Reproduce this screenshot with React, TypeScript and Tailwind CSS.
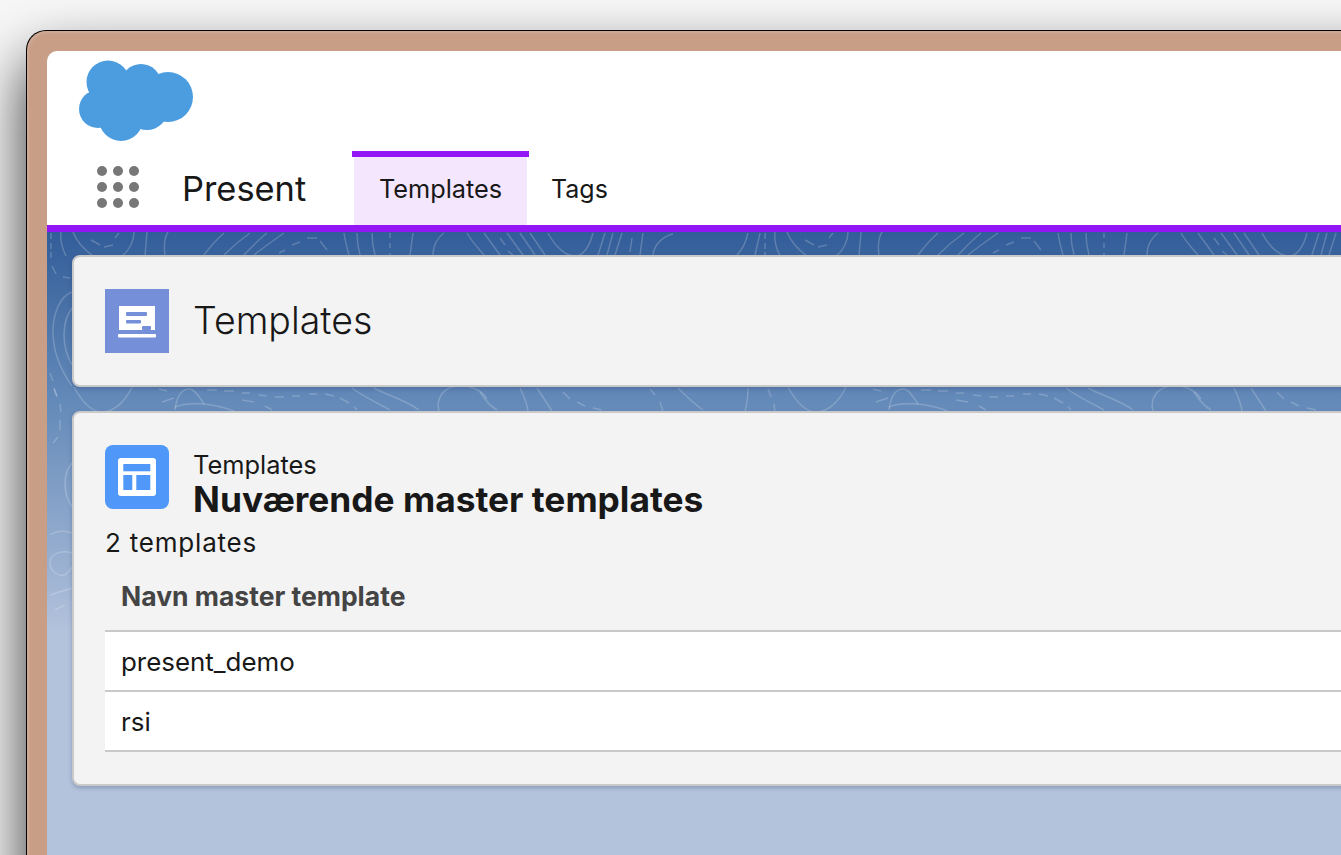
// background contour lines, the pattern repeats every 714px across the page
const tileLines = [
  // strip under the header
  "M51 233V239", "M51 243V249", "M51 252V258",
  "M61 232C60 240 63 250 66 256",
  "M73 232C76 240 82 248 93 256",
  "M91 240L100 245", "M104 247L113 245", "M115 238L119 233",
  "M134 232C134 240 130 250 122 256",
  "M147 232L145 256",
  "M168 232C164 238 164 248 165 256",
  "M204 255C210 247 216 240 224 233",
  "M224 255C232 247 240 240 250 233",
  "M244 255C252 247 258 240 267 233",
  "M254 255C264 247 274 240 284 233",
  "M279 253L285 250", "M292 245L300 242", "M307 238H317", "M320 241L327 250",
  "M344 233C345 240 347 248 349 255",
  "M357 233C357 240 358 248 360 255",
  "M372 233C372 240 373 248 375 255",
  "M390 233V238", "M390 243V248", "M390 253V256",
  "M413 233C412 240 411 248 410 255",
  "M444 233C438 237 433 245 433 255",
  "M467 233C472 242 478 248 484 255",
  "M484 233L500 255",
  "M500 238L505 245", "M508 251L513 255",
  "M507 233L523 255", "M520 233L535 255", "M530 233L545 255",
  "M548 233C556 248 566 256 575 256C584 256 590 245 593 233",
  "M605 233L598 255", "M613 233L607 255", "M622 233L615 255",
  "M632 238L630 252", "M643 233L640 255",
  "M673 234C664 236 654 244 653 255",
  "M748 233C746 242 742 250 737 255",
  "M760 233L755 255",
  // strip between the two cards
  "M54 389L57 397", "M60 404L61 412",
  "M74 387C80 398 90 412 102 412C115 412 126 400 132 387",
  "M159 389L167 391", "M162 402L174 398",
  "M175 410C176 400 180 389 189 389C195 389 200 398 204 404",
  "M175 407C186 402 210 402 234 411",
  "M207 390H217", "M224 391H234", "M242 393H250", "M242 400L254 402",
  "M259 395L267 396", "M275 397H284", "M292 396H300", "M309 394H317",
  "M325 394L334 396", "M340 398L349 403", "M354 407L357 410", "M265 406L272 410",
  "M352 388C362 396 376 402 390 410",
  "M374 388C384 394 406 400 419 410",
  "M439 411C436 400 442 387 458 386C470 385 482 390 487 399",
  "M480 392C485 400 490 406 497 410",
  "M520 388C524 396 527 404 528 411",
  "M537 388L552 411",
  "M563 392L570 399", "M577 402L585 406", "M593 408L602 410",
  "M650 389L655 395", "M660 402L663 411",
  "M678 388C686 396 694 404 703 410",
  "M748 388C748 396 747 404 745 411",
];

const leftLines = [
  "M52 266L56 274", "M63 277L70 278",
  "M72 292C60 296 52 315 53 335C54 355 62 372 72 386",
  "M72 308C66 316 64 325 64 335C64 347 68 358 72 365",
  "M50 373L53 381", "M54 388L57 396", "M60 420V430", "M53 443L58 437",
  "M72 463C67 469 65 476 65 483C65 493 68 501 72 507",
  "M50 535C56 531 64 530 72 533",
  "M72 553C62 550 50 553 50 563C50 572 58 576 64 575C68 574 70 570 72 567",
  "M50 595L72 588", "M55 610L65 605",
];

const tileOffsets = [-714, 0, 714];

// grid of nine dots in the header
function AppLauncher() {
  return (
    <div className="grid w-[42px] grid-cols-3 gap-[6px]">
      {Array.from({ length: 9 }).map((_, i) => (
        <span key={i} className="h-[10px] w-[10px] rounded-full bg-[#777777]" />
      ))}
    </div>
  );
}

function Cloud() {
  return (
    <svg width="116" height="82" viewBox="0 0 116 82" className="block">
      <g fill="#4b9ddf">
        <circle cx="30" cy="22" r="21.5" />
        <circle cx="63" cy="24" r="20" />
        <circle cx="90" cy="37" r="25" />
        <circle cx="20" cy="49" r="19" />
        <circle cx="43" cy="59" r="22" />
        <circle cx="69" cy="49" r="21" />
        <circle cx="55" cy="40" r="24" />
      </g>
    </svg>
  );
}

export default function App() {
  return (
    <div className="h-[855px] w-[1341px] overflow-hidden bg-[#f7f7f7] pl-[26px] pt-[30px] font-['Inter',sans-serif] text-[#181818]">
      <div className="h-[900px] w-[1400px] rounded-tl-[20px] border-l border-t border-black bg-[#c99e87] pl-[20px] pt-[20px] shadow-[0_30px_60px_rgba(0,0,0,0.8),inset_2px_2px_2px_rgba(255,255,255,0.12)]">
        <div className="relative flex h-full flex-col overflow-hidden rounded-tl-[10px] bg-white">
          <header className="relative h-[174px] shrink-0">
            <div className="pl-[31px] pt-[9px]">
              <Cloud />
            </div>
            <div className="absolute bottom-0 left-0 flex h-[74px] items-end">
              <div className="mb-[17px] ml-[50px]">
                <AppLauncher />
              </div>
              <div className="mb-[15px] ml-[43px] w-[172px] text-[34.4px] leading-[42px]">Present</div>
              <div className="relative flex h-[68px] w-[173px] items-center justify-center bg-[#f4e6fd] pb-[4px] text-[25.3px]">
                <span className="absolute -left-[2px] -right-[2px] -top-[6px] h-[6px] bg-[#9316f5]" />
                Templates
              </div>
              <div className="flex h-[68px] items-center pb-[3px] pl-[24px] text-[25px]">Tags</div>
            </div>
          </header>
          <div className="h-[7px] shrink-0 bg-[#9316f5]" />

          <main className="relative flex-1 bg-[linear-gradient(180deg,#335d99_0px,#3b659e_30px,#648ab9_170px,#9cb2d2_340px,#b4c3dc_400px,#b4c3dc_100%)] pl-[25px] pt-[23px]">
            <svg
              className="absolute left-0 top-0"
              width="1341"
              height="400"
              viewBox="47 232 1341 400"
              fill="none"
              stroke="#ffffff"
              strokeOpacity="0.2"
              strokeWidth="1.5"
            >
              {tileOffsets.map((x) => (
                <g key={x} transform={`translate(${x} 0)`}>
                  {tileLines.map((d) => (
                    <path key={d} d={d} />
                  ))}
                </g>
              ))}
              {leftLines.map((d) => (
                <path key={d} d={d} />
              ))}
            </svg>

            <section className="relative flex h-[132px] items-center gap-[24px] rounded-[8px] border-2 border-[#c9c9c9] bg-[#f3f3f3] pl-[31px] shadow-[0_2px_4px_rgba(40,60,110,0.3)]">
              <svg width="64" height="64" viewBox="0 0 64 64">
                <rect width="64" height="64" fill="#7590d9" />
                <rect x="14" y="17" width="36" height="24" fill="#fff" />
                <rect x="37" y="37" width="9" height="4" rx="1" fill="#7590d9" />
                <rect x="13" y="45" width="38" height="3.5" rx="1" fill="#fff" />
                <rect x="21" y="23" width="21" height="4" rx="1" fill="#7590d9" />
                <rect x="21" y="31" width="15" height="3.5" rx="1" fill="#7590d9" />
              </svg>
              <h1 className="text-[37.5px] font-light leading-none">Templates</h1>
            </section>

            <section className="relative mt-[24px] h-[375px] rounded-[8px] border-2 border-[#c9c9c9] bg-[#f3f3f3] pt-[32px] shadow-[0_2px_4px_rgba(40,60,110,0.3)]">
              <div className="flex gap-[24px] pl-[31px]">
                <svg width="64" height="64" viewBox="0 0 64 64" className="shrink-0">
                  <rect width="64" height="64" rx="8" fill="#4f97f9" />
                  <rect x="13" y="13" width="38" height="38" rx="3" fill="#fff" />
                  <rect x="18.3" y="19" width="27" height="7.3" fill="#4f97f9" />
                  <rect x="18.3" y="30" width="9" height="15" fill="#4f97f9" />
                  <rect x="31.3" y="30" width="14" height="15" fill="#4f97f9" />
                </svg>
                <div className="pt-[6px]">
                  <p className="text-[25.4px] leading-[28px]">Templates</p>
                  <h2 className="text-[35.3px] font-bold leading-[42px]">Nuværende master templates</h2>
                </div>
              </div>
              <p className="mt-[7px] pl-[31px] text-[26px] leading-[30px] tracking-[0.8px]">2 templates</p>
              <div className="ml-[31px] mt-[10px]">
                <div className="flex h-[64px] items-center border-b-2 border-[#c9c9c9] pb-[4px] pl-[16px] text-[26.5px] font-bold text-[#444444]">
                  Navn master template
                </div>
                <div className="flex h-[60px] items-center border-b-2 border-[#c9c9c9] bg-white pl-[16px] pt-[2px] text-[25.9px]">
                  present_demo
                </div>
                <div className="flex h-[60px] items-center border-b-2 border-[#c9c9c9] bg-white pl-[16px] pt-[2px] text-[25.9px]">
                  rsi
                </div>
              </div>
            </section>
          </main>
        </div>
      </div>
    </div>
  );
}
